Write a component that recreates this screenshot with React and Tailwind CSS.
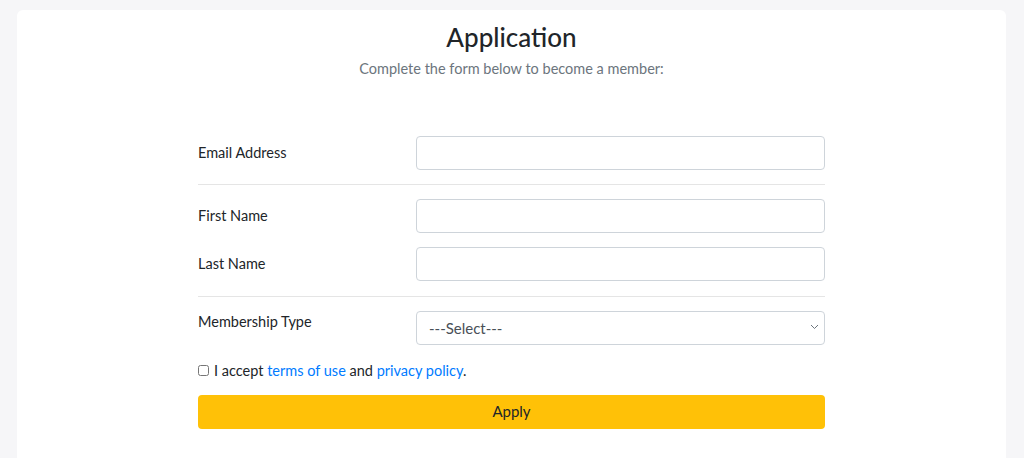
import React from 'react';

const font = { fontFamily: '"Segoe UI", Lato, sans-serif' };

const Field = ({ label, children }) => (
  <div className="flex items-center">
    <label className="w-[218px] shrink-0 text-[14.5px]">{label}</label>
    <div className="flex-1">{children}</div>
  </div>
);

const Input = () => (
  <input className="block h-[34px] w-full rounded border border-[#ced4da] bg-white px-3 text-[15px] outline-none" />
);

const App = () => {
  return (
    <div className="min-h-screen bg-[#f6f6f8] pl-[17px] pr-[18px] pt-[10px] text-[#212529]" style={font}>
      <div className="min-h-[448px] rounded-t-md bg-white pt-[8px]">
        <div className="text-center">
          <h1 className="text-[26px] font-medium leading-[38px]">Application</h1>
          <p className="mt-[2px] text-[14.5px] text-[#6c757d]">Complete the form below to become a member:</p>
        </div>

        <form className="mx-auto mt-[56px] w-[627px]">
          <Field label="Email Address">
            <Input />
          </Field>
          <hr className="my-[14px] border-t border-[#e5e5e5]" />
          <div className="flex flex-col gap-[14px]">
            <Field label="First Name">
              <Input />
            </Field>
            <Field label="Last Name">
              <Input />
            </Field>
          </div>
          <hr className="mt-[15px] mb-[14px] border-t border-[#e5e5e5]" />
          <div className="flex items-start">
            <label className="w-[218px] shrink-0 text-[14.5px]">Membership Type</label>
            <div className="relative flex-1">
              <select className="block h-[34px] w-full appearance-none rounded border border-[#ced4da] bg-white px-3 text-[15px] text-[#495057] outline-none">
                <option>---Select---</option>
              </select>
              <svg className="pointer-events-none absolute right-[6px] top-[13px]" width="9" height="6" viewBox="0 0 9 6" fill="none">
                <path d="M1 1l3.5 3.5L8 1" stroke="#6c757d" strokeWidth="1" />
              </svg>
            </div>
          </div>
          <div className="mt-[15px] flex items-center gap-[5px] text-[14.5px]">
            <input type="checkbox" className="h-[11px] w-[11px]" />
            <span>
              I accept <a className="text-[#007bff]" href="#">terms of use</a> and{' '}
              <a className="text-[#007bff]" href="#">privacy policy</a>.
            </span>
          </div>
          <button type="button" className="mt-[13px] block h-[34px] w-full rounded bg-[#ffc107] text-[15px] text-[#212529]">
            Apply
          </button>
        </form>
      </div>
    </div>
  );
};

export default App;
